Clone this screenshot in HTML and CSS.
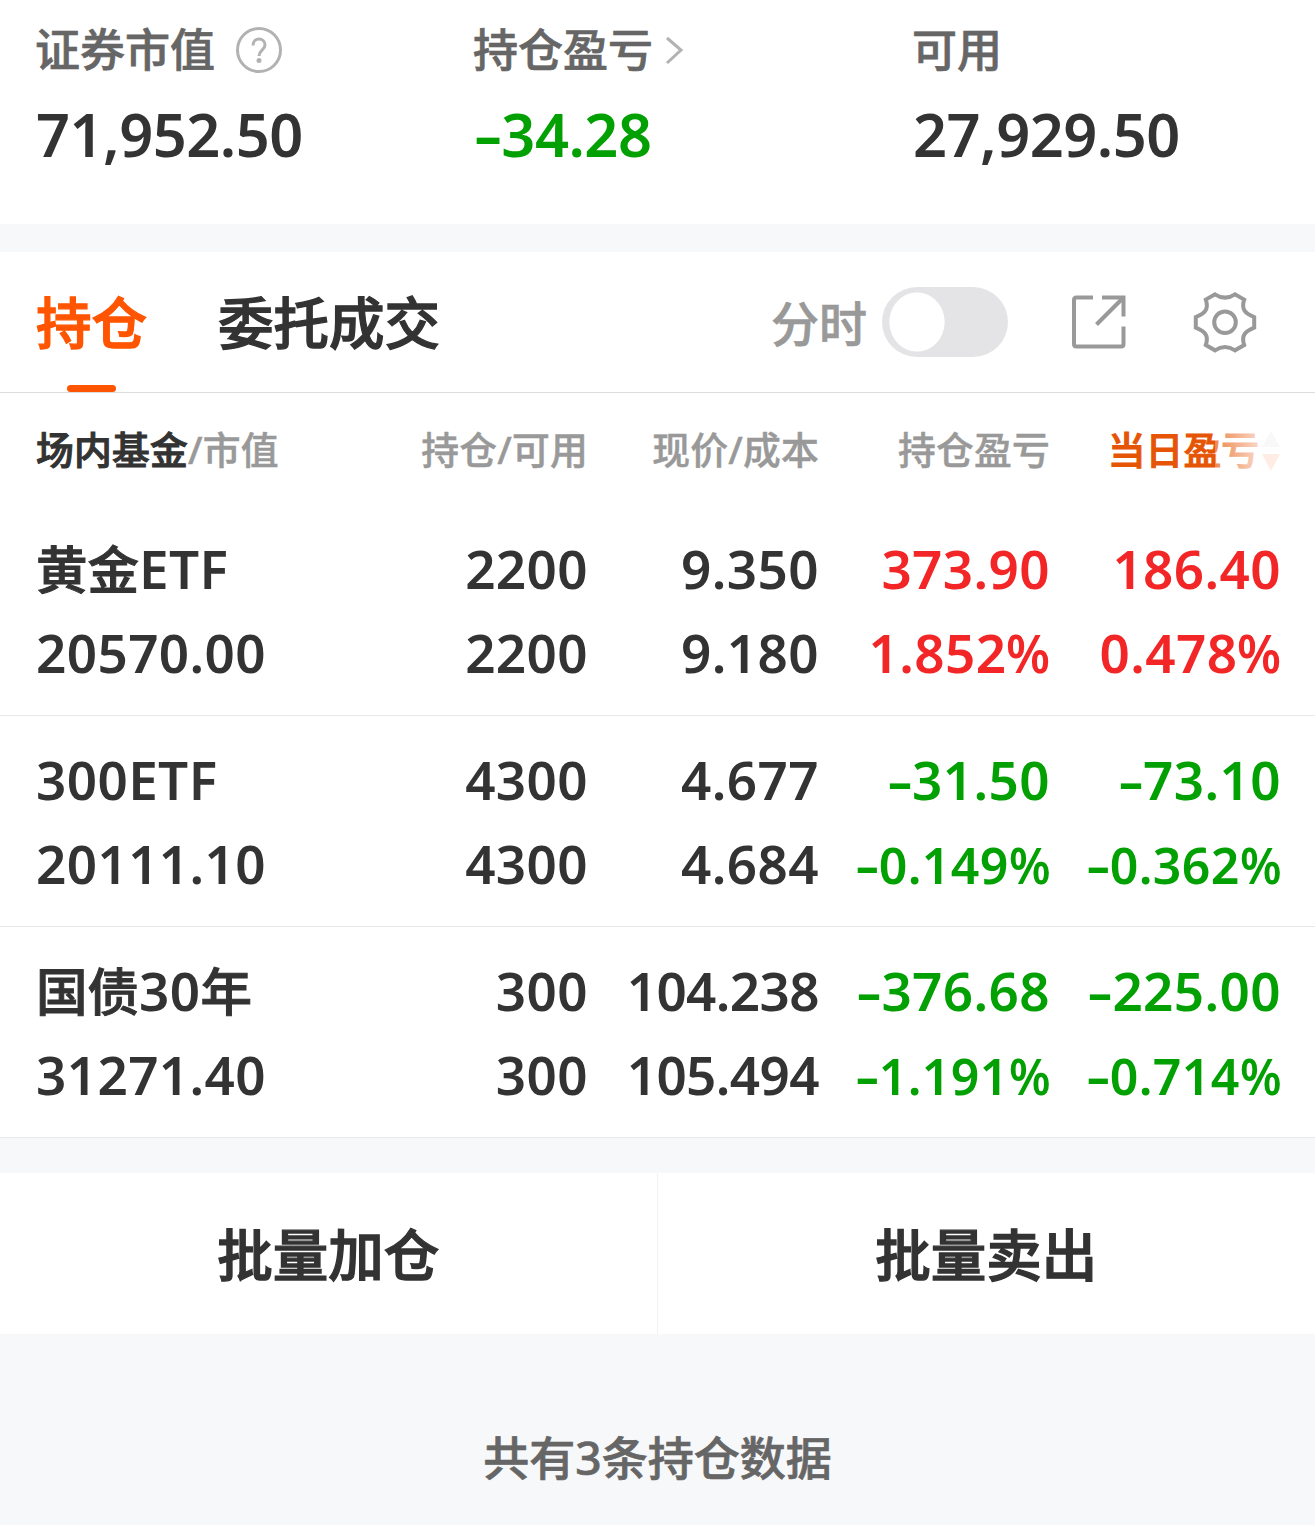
FILE: index.html
```html
<!DOCTYPE html>
<html lang="zh-CN">

<head>
    <meta charset="UTF-8" />
    <meta name="viewport" content="width=device-width, initial-scale=1.0" />
    <link rel="stylesheet" href="styles.css">
    <title>持仓</title>
</head>

<body>
    <section class="summary">
        <div class="summary-item">
            <div class="summary-label"><span>证券市值</span>
                <svg class="help" viewBox="0 0 48 48">
                    <circle cx="24" cy="24" r="21.5" />
                    <path d="M18 19.500C18 15.500 20.500 13 24 13s6 2.500 6 6c0 4.500-6 5.500-6 11" />
                    <circle class="dot" cx="24" cy="34.500" r="2.500" />
                </svg>
            </div>
            <div class="summary-value">71,952.50</div>
        </div>
        <div class="summary-item">
            <div class="summary-label"><span>持仓盈亏</span>
                <svg class="arrow" viewBox="0 0 20 30">
                    <path d="M3 3l14 12L3 28" />
                </svg>
            </div>
            <div class="summary-value down"><span class="minus">-</span>34.28</div>
        </div>
        <div class="summary-item">
            <div class="summary-label"><span>可用</span></div>
            <div class="summary-value">27,929.50</div>
        </div>
    </section>

    <nav class="tabs">
        <div class="tab active">持仓</div>
        <div class="tab">委托成交</div>
        <div class="tools">
            <span class="tools-label">分时</span>
            <span class="switch"></span>
            <svg class="icon-share" viewBox="0 0 56 56">
                <path d="M22 3.500H5.500Q3 3.500 3 6V50Q3 52.500 5.500 52.500H50Q52.500 52.500 52.500 50V32.500" />
                <path d="M31 3.500H52.500V22.500" />
                <path d="M51.500 4.500L25.500 30.500" />
            </svg>
            <svg class="icon-gear" viewBox="-34 -33.300 66 66">
                <path d="M-10-28Q0-21.300 10-28L19.200-22.700C16-13 20-9 29.200-5.300V5.300C20 9 16 13 19.200 22.700L10 28Q0 21.300-10 28L-19.200 22.700C-16 13-20 9-29.200 5.300V-5.300C-20-9-16-13-19.200-22.700Z" />
                <circle cx="0" cy="0" r="10.800" />
            </svg>
        </div>
    </nav>

    <section class="holdings">
        <div class="row head">
            <div><b>场内基金</b>/市值</div>
            <div>持仓/可用</div>
            <div>现价/成本</div>
            <div>持仓盈亏</div>
            <div class="sorted">当日盈亏
                <svg class="sort" viewBox="0 0 20 40">
                    <path class="asc" d="M10 0L19 16H1z" />
                    <path class="desc" d="M1 23H19L10 40z" />
                </svg>
            </div>
        </div>
        <div class="row">
            <div><span class="name">黄金</span>ETF<br>20570.00</div>
            <div>2200<br>2200</div>
            <div>9.350<br>9.180</div>
            <div class="up">373.90<br>1.852<span class="pct">%</span></div>
            <div class="up">186.40<br>0.478<span class="pct">%</span></div>
        </div>
        <div class="row">
            <div>300ETF<br>20111.10</div>
            <div>4300<br>4300</div>
            <div>4.677<br>4.684</div>
            <div class="down"><span class="minus">-</span>31.50<br><span class="fit"><span class="minus">-</span>0.149<span class="pct">%</span></span></div>
            <div class="down"><span class="minus">-</span>73.10<br><span class="fit"><span class="minus">-</span>0.362<span class="pct">%</span></span></div>
        </div>
        <div class="row">
            <div><span class="name">国债</span>30<span class="name">年</span><br>31271.40</div>
            <div>300<br>300</div>
            <div class="long">104.238<br>105.494</div>
            <div class="down"><span class="minus">-</span>376.68<br><span class="fit"><span class="minus">-</span>1.191<span class="pct">%</span></span></div>
            <div class="down"><span class="minus">-</span>225.00<br><span class="fit"><span class="minus">-</span>0.714<span class="pct">%</span></span></div>
        </div>
    </section>

    <section class="actions">
        <div class="action">批量加仓</div>
        <div class="action">批量卖出</div>
    </section>

    <footer class="total">共有3条持仓数据</footer>
</body>

</html>
```

FILE: styles.css
```css
:root {
    --bg: #f7f8fa;
    --text: #333;
    --muted: #999;
    --orange: #ff5500;
    --red: #f22626;
    --green: #03a003;
}

body {
    margin: 0;
    background: var(--bg);
    color: var(--text);
    font-family: "Noto Sans", "Noto Sans CJK SC", sans-serif;
    font-weight: 600;
}

svg {
    fill: none;
    stroke: var(--muted);
    stroke-width: 4;
    flex: none;
}

.up {
    color: var(--red);
}

.down {
    color: var(--green);
}

/* summary */
.summary {
    display: grid;
    grid-template-columns: 438px 439px 1fr;
    height: 208px;
    padding: 16px 0 0 36px;
    background: #fff;
    margin-bottom: 28px;
}

.summary-label {
    display: flex;
    align-items: center;
    height: 66px;
    font-size: 45px;
    font-weight: 500;
    color: #666;
    -webkit-text-stroke: .7px;
}

.summary-label span {
    padding-bottom: 4px;
    margin-left: -1px;
}

.summary-value {
    height: 104px;
    line-height: 104px;
    font-size: 59.500px;
    letter-spacing: -.5px;
}

.help {
    width: 48px;
    height: 48px;
    margin: 2px 0 0 20px;
    stroke: #b2b2b2;
    stroke-width: 3;
}

.help .dot {
    fill: #b2b2b2;
    stroke: none;
}

.arrow {
    width: 20px;
    height: 30px;
    margin: 1px 0 0 11px;
    stroke: #b2b2b2;
    stroke-width: 3;
}

/* tabs */
.tabs {
    display: flex;
    height: 140px;
    padding: 0 58px 0 36px;
    background: #fff;
    border-bottom: 1px solid #ddd;
}

.tab {
    position: relative;
    line-height: 142px;
    font-size: 55.500px;
    font-weight: 500;
    -webkit-text-stroke: 1.300px;
    margin-right: 71px;
}

.tab.active {
    color: var(--orange);
}

.tab.active::after {
    content: "";
    position: absolute;
    left: 31px;
    bottom: 0;
    width: 49px;
    height: 7px;
    border-radius: 4px;
    background: var(--orange);
}

.tools {
    display: flex;
    align-items: center;
    margin-left: auto;
}

.tools-label {
    font-size: 48px;
    font-weight: 500;
    -webkit-text-stroke: .7px;
    padding-bottom: 3px;
    color: var(--muted);
}

.switch {
    width: 126px;
    height: 70px;
    margin: 0 63px 0 15px;
    border-radius: 35px;
    background: radial-gradient(ellipse 28px 30px at 35px 35px, #fff 97%, #e4e4e6);
}

.icon-share {
    width: 56px;
    height: 56px;
    margin-right: 64px;
}

.icon-gear {
    width: 66px;
    height: 66px;
}

/* holdings */
.holdings {
    background: #fff;
}

.row {
    display: grid;
    grid-template-columns: 1fr 231px 231px 231px 231px;
    height: 188px;
    padding: 22px 34px 0 36px;
    border-bottom: 1px solid #e8e8e8;
    font-size: 53px;
    line-height: 84px;
    letter-spacing: .4px;
    text-align: right;
    white-space: nowrap;
}

.row > div:first-child {
    text-align: left;
}

.row.head {
    height: 112px;
    padding-top: 0;
    border: 0;
    font-size: 37.800px;
    line-height: 113px;
    letter-spacing: .2px;
    font-weight: 500;
    color: var(--muted);
    -webkit-text-stroke: .5px;
}

.head b {
    color: var(--text);
    font-weight: 500;
    -webkit-text-stroke: 1px;
}

.name {
    font-size: 51.500px;
    font-weight: 500;
    letter-spacing: 0;
    -webkit-text-stroke: 1px;
}

.long {
    letter-spacing: -.6px;
}

.sorted {
    display: flex;
    align-items: center;
    justify-content: flex-end;
    position: relative;
    letter-spacing: 0;
    color: #e65505;
    -webkit-text-stroke: 1px;
}

/* fades out the end of the last column title */
.sorted::after {
    content: "";
    position: absolute;
    right: 0;
    top: 0;
    width: 66px;
    height: 112px;
    background: linear-gradient(to right, rgba(255, 255, 255, .3), #fff);
}

.sort {
    position: relative;
    z-index: 1;
    width: 20px;
    height: 40px;
    margin: 3px 0 0 2px;
    stroke: none;
}

.asc {
    fill: #f8f8f8;
}

.desc {
    fill: #ffece4;
}

.minus {
    display: inline-block;
    width: .46em;
    transform: scaleX(1.5);
    text-align: center;
}

.pct {
    display: inline-block;
    transform: scaleX(.95);
    transform-origin: left;
    margin-right: -.06em;
}

.fit {
    font-size: 50px;
}

/* bottom */
.actions {
    display: grid;
    grid-template-columns: 1fr 1fr;
    height: 161px;
    margin-top: 35px;
    background: #fff;
}

.action {
    height: 161px;
    line-height: 164px;
    font-size: 55.500px;
    font-weight: 500;
    -webkit-text-stroke: 1.300px;
    text-align: center;
}

.action:first-child {
    border-right: 1px solid #f2f2f4;
}

.total {
    height: 191px;
    line-height: 246px;
    font-size: 46px;
    font-weight: 500;
    -webkit-text-stroke: .7px;
    text-align: center;
    color: #666;
    overflow: hidden;
}
```
